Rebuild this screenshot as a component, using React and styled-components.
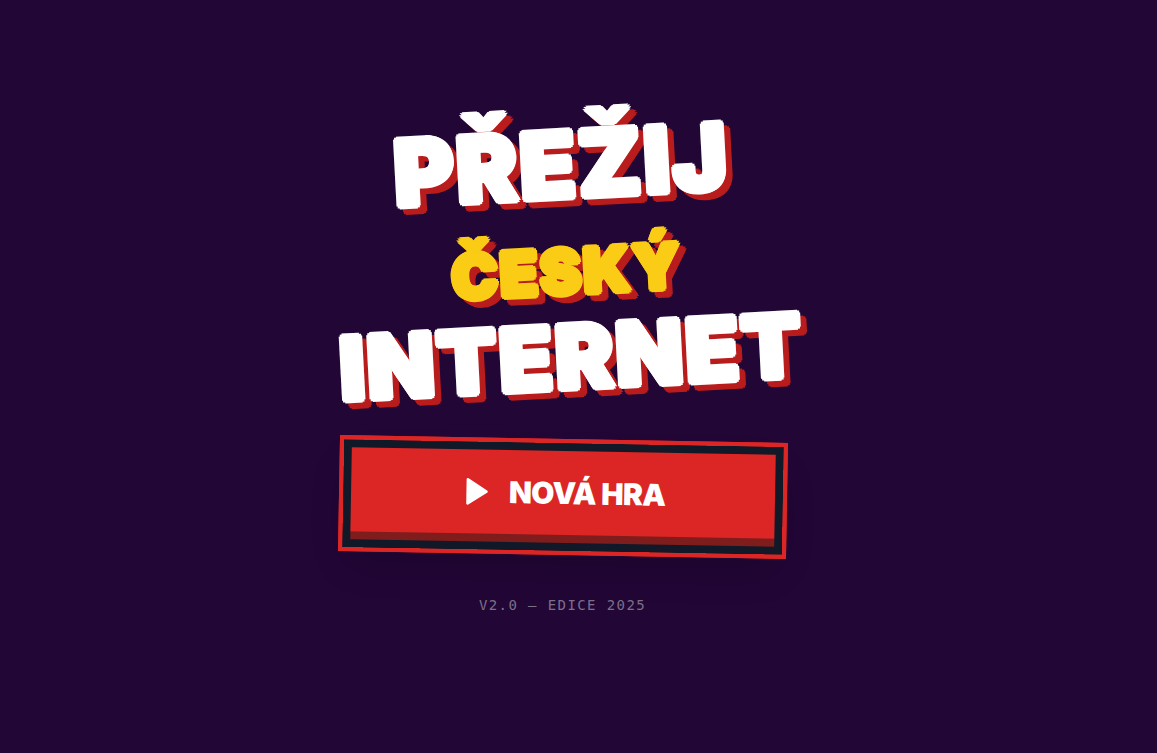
import React from "react";
import styled, { createGlobalStyle } from "styled-components";

const App = () => {
  return (
    <>
      <GlobalStyle />
      <Screen>
        <Title>
          <Line $size="92px">PŘEŽIJ</Line>
          <Line $size="92px">
            <Accent>ČESKÝ</Accent>
          </Line>
          <Line $size="88px">INTERNET</Line>
        </Title>
        <PlayButton type="button">
          <PlayIcon viewBox="0 0 24 24" aria-hidden="true">
            <polygon points="5 3 19 12 5 21 5 3" />
          </PlayIcon>
          <span>NOVÁ HRA</span>
        </PlayButton>
        <Version>V2.0 — EDICE 2025</Version>
      </Screen>
    </>
  );
};

// ring of hard shadows, thickens the letters and softens their corners
const ring = [
  [3, 0],
  [2, 2],
  [0, 3],
  [-2, 2],
  [-3, 0],
  [-2, -2],
  [0, -3],
  [2, -2],
];

const outline = (color, offset) =>
  ring.map(([x, y]) => `${x + offset}px ${y + offset}px ${color}`).join(", ");

const blockShadow = (color) => `${outline(color, 0)}, ${outline("#b91c1c", 6)}`;

const GlobalStyle = createGlobalStyle`
  * {
    box-sizing: border-box;
  }
  body {
    margin: 0;
    background: #220636;
    font-family: Inter, sans-serif;
  }
`;

const Screen = styled.main`
  min-height: 100vh;
  padding: 0 32px 22px 0;
  display: flex;
  flex-direction: column;
  align-items: center;
  justify-content: center;
  overflow: hidden;
`;

const Title = styled.h1`
  margin: 0 0 34px;
  padding-left: 8px;
  font-weight: 900;
  line-height: 96px;
  letter-spacing: 2px;
  text-align: center;
  color: #ffffff;
  text-shadow: ${blockShadow("#ffffff")};
  transform: rotate(-3deg);
`;

const Line = styled.span`
  display: block;
  font-size: ${(props) => props.$size};
`;

const Accent = styled.span`
  font-size: 62px;
  line-height: 1;
  color: #facc15;
  text-shadow: ${blockShadow("#facc15")};
`;

const PlayButton = styled.button`
  width: 100%;
  max-width: 448px;
  height: 116px;
  padding: 0 24px 8px;
  display: flex;
  align-items: center;
  justify-content: center;
  gap: 16px;
  border: 4px solid #dc2626;
  background: #dc2626;
  color: #ffffff;
  font-family: inherit;
  font-size: 30px;
  line-height: 36px;
  font-weight: 900;
  letter-spacing: -0.025em;
  cursor: pointer;
  transform: rotate(1deg);
  box-shadow: inset 0 0 0 8px #111827, inset 0 -16px 0 #7f1d1d,
    0 20px 40px -12px rgba(0, 0, 0, 0.2);
`;

const PlayIcon = styled.svg`
  width: 32px;
  height: 32px;
  fill: currentColor;
  stroke: currentColor;
  stroke-width: 2;
  stroke-linecap: round;
  stroke-linejoin: round;
`;

const Version = styled.p`
  margin: 40px 0 0;
  color: #7d6f89;
  font-family: "DejaVu Sans Mono", monospace;
  font-size: 14px;
  line-height: 20px;
  letter-spacing: 0.1em;
`;

export default App;
